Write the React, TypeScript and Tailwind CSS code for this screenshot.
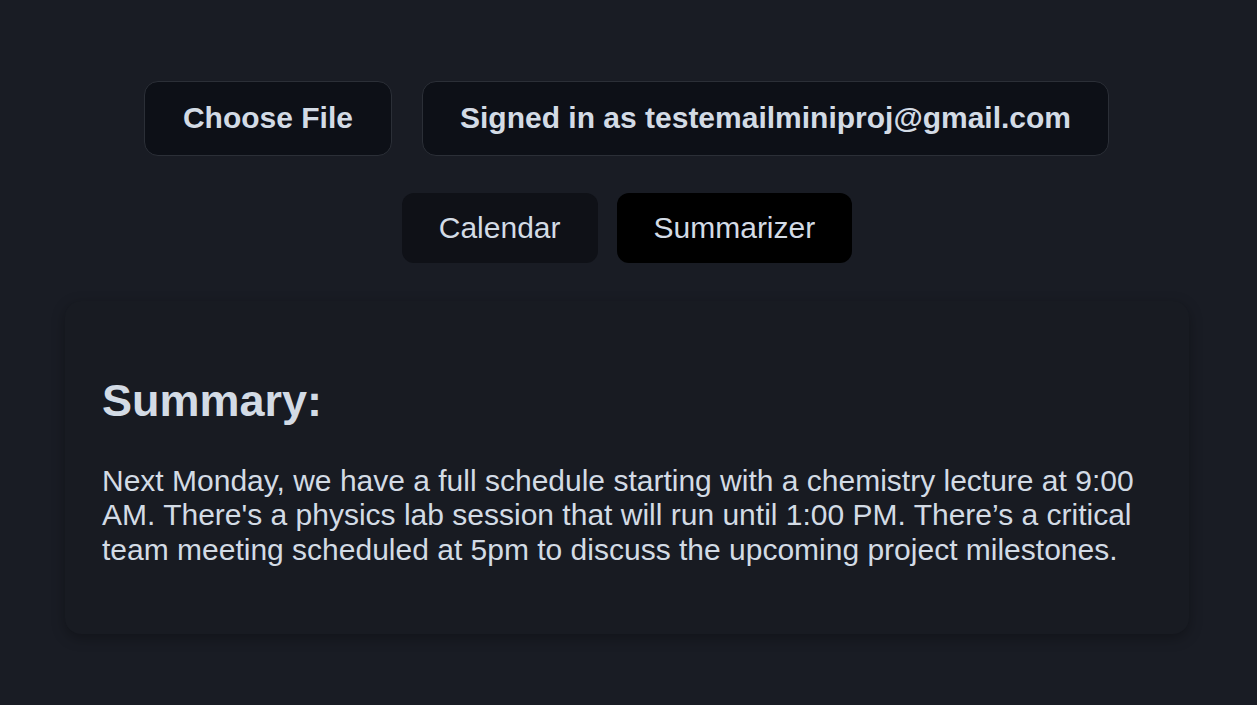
import React from 'react';

const App: React.FC = () => {
  return (
    <div className="min-h-screen bg-[#191c24] text-[#d3dbe5] font-['Liberation_Sans',Arial,sans-serif] text-[30px] leading-[1.15] pt-[81px]">
      {/* Top actions */}
      <div className="flex justify-center gap-[30px] pr-[4px]">
        <button className="px-[38px] py-[19px] rounded-[14px] border border-[#2b2f37] bg-[#0d1017] font-bold">
          Choose File
        </button>
        <button className="px-[37px] py-[19px] rounded-[14px] border border-[#2b2f37] bg-[#0d1017] font-bold">
          Signed in as testemailminiproj@gmail.com
        </button>
      </div>

      {/* Tabs */}
      <div className="flex justify-center gap-[19px] mt-[37px] pr-[3px]">
        <button className="px-[37px] py-[18px] rounded-[12px] bg-[#0f1117]">Calendar</button>
        <button className="px-[37px] py-[18px] rounded-[12px] bg-black">Summarizer</button>
      </div>

      {/* Summary card */}
      <div className="mt-[38px] mx-[65px] w-[1124px] rounded-[16px] bg-[#181b22] p-[37px] shadow-[0_4px_14px_rgba(0,0,0,0.3)]">
        <h2 className="text-[45px] font-bold mt-[37px] mb-[37px]">Summary:</h2>
        <p className="mb-[30px]">
          Next Monday, we have a full schedule starting with a chemistry lecture at 9:00 AM. There's a physics lab
          session that will run until 1:00 PM. There’s a critical team meeting scheduled at 5pm to discuss the
          upcoming project milestones.
        </p>
      </div>
    </div>
  );
};

export default App;
